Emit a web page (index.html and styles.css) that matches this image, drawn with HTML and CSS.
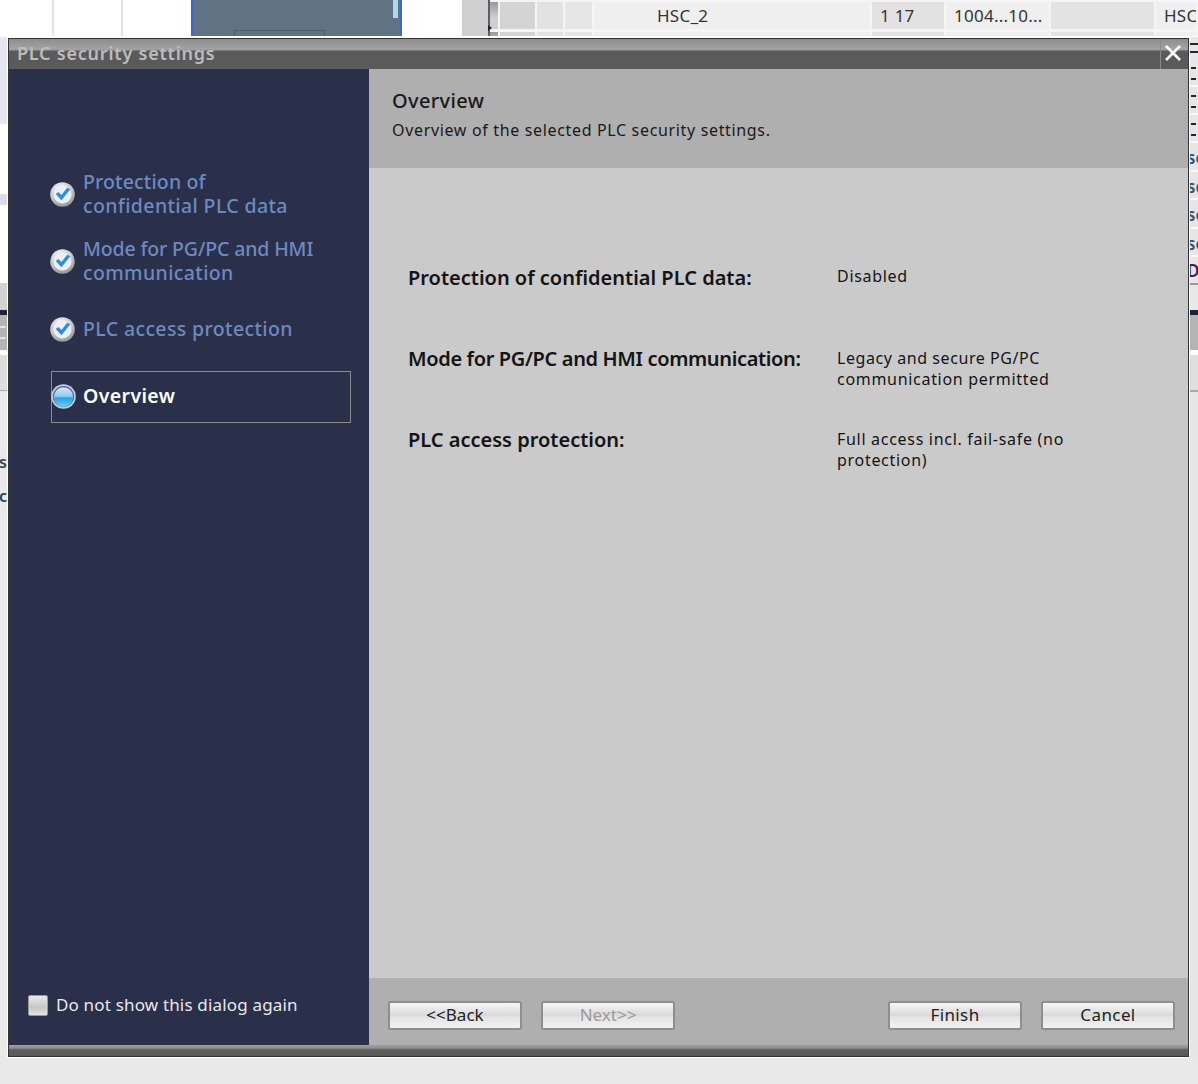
FILE: index.html
```html
<!DOCTYPE html>
<html lang="en">
<head>
<meta charset="utf-8">
<title>PLC security settings</title>
<link rel="stylesheet" href="styles.css">
</head>
<body>
<svg class="defs" width="0" height="0" aria-hidden="true">
  <defs>
    <radialGradient id="ring" cx="40%" cy="25%" r="85%">
      <stop offset="0" stop-color="#f4f4f4"/>
      <stop offset="0.55" stop-color="#c8c8c8"/>
      <stop offset="1" stop-color="#868686"/>
    </radialGradient>
    <linearGradient id="ball" x1="0" y1="0" x2="0" y2="1">
      <stop offset="0" stop-color="#d6e6f6"/>
      <stop offset="0.45" stop-color="#94cbf0"/>
      <stop offset="0.55" stop-color="#2f9fe0"/>
      <stop offset="1" stop-color="#5fd8f4"/>
    </linearGradient>
    <symbol id="check" viewBox="0 0 24 24">
      <circle cx="12" cy="12" r="11.8" fill="url(#ring)"/>
      <circle cx="12" cy="12" r="8.6" fill="#eceff5"/>
      <path d="M5.5 11.5 L11 17.5 L19.5 7 L16.5 5.5 L11 12.5 L8 9.5 Z" fill="#2c8ee0"/>
    </symbol>
    <symbol id="current" viewBox="0 0 24 24">
      <circle cx="12" cy="12" r="11.8" fill="#c9ccd6"/>
      <circle cx="12" cy="12" r="10.2" fill="#4a62b8"/>
      <circle cx="12" cy="12.6" r="9.4" fill="url(#ball)"/>
    </symbol>
  </defs>
</svg>
<div class="page">
  <div class="top">
    <div class="t-col t-w1"></div>
    <div class="t-col t-w2"></div>
    <div class="t-col t-w3"></div>
    <div class="selbox"><span class="selbar"></span><span class="selinner"></span></div>
    <div class="t-gap"></div>
    <div class="table">
      <div class="t-handle"><span class="t-arrow"></span></div>
      <div class="t-rows">
        <div class="t-row">
          <span class="c c0"></span><span class="c c1"></span><span class="c c2"></span><span class="c c3"></span>
          <span class="c c4">HSC_2</span>
          <span class="c c5">1 17</span>
          <span class="c c6">1004...10...</span>
          <span class="c c7"></span>
          <span class="c c8">HSC</span>
        </div>
        <div class="t-row">
          <span class="c c0"></span><span class="c c1"></span><span class="c c2"></span><span class="c c3"></span>
          <span class="c c4"></span><span class="c c5"></span><span class="c c6"></span><span class="c c7"></span><span class="c c8"></span>
        </div>
      </div>
    </div>
  </div>
  <div class="middle">
    <div class="left-edge">
      <div class="le a"></div><div class="le b"></div><div class="le c2b"></div><div class="le b2"></div>
      <div class="le d"></div><div class="le e"></div><div class="le f">C</div><div class="le g"></div><div class="le h"></div>
      <div class="le i"><span class="cut one">s</span><span class="cut two">c</span></div>
    </div>
    <section class="dialog">
      <header class="titlebar">
        <span class="title">PLC security settings</span>
        <button class="close" aria-label="Close">
          <svg width="18" height="18" viewBox="0 0 18 18"><path d="M2 2 L16 16 M16 2 L2 16" stroke="#fff" stroke-width="2.6"/></svg>
        </button>
      </header>
      <div class="content">
        <aside class="side">
          <ul class="steps">
            <li class="step s1"><svg class="ic"><use href="#check"/></svg><span><span class="ln l1">Protection of</span><span class="ln l2">confidential PLC data</span></span></li>
            <li class="step s2"><svg class="ic"><use href="#check"/></svg><span><span class="ln l3">Mode for PG/PC and HMI</span><span class="ln l2">communication</span></span></li>
            <li class="step s3"><svg class="ic"><use href="#check"/></svg><span class="ln l2">PLC access protection</span></li>
            <li class="step s4"><svg class="ic"><use href="#current"/></svg><span class="ln l2">Overview</span></li>
          </ul>
          <label class="dont"><span class="box"></span><span>Do not show this dialog again</span></label>
        </aside>
        <main class="main">
          <div class="head">
            <h1>Overview</h1>
            <p>Overview of the selected PLC security settings.</p>
          </div>
          <div class="body">
            <div class="item i1"><div class="k">Protection of confidential PLC data:</div><div class="v">Disabled</div></div>
            <div class="item i2"><div class="k tight">Mode for PG/PC and HMI communication:</div><div class="v"><span class="ln l4">Legacy and secure PG/PC</span><span class="ln">communication permitted</span></div></div>
            <div class="item i3"><div class="k">PLC access protection:</div><div class="v"><span class="ln">Full access incl. fail-safe (no</span><span class="ln">protection)</span></div></div>
          </div>
          <div class="foot">
            <button class="btn">&lt;&lt;Back</button>
            <button class="btn off">Next&gt;&gt;</button>
            <span class="spacer"></span>
            <button class="btn wide">Finish</button>
            <button class="btn wide">Cancel</button>
          </div>
        </main>
      </div>
      <div class="bottombar"></div>
    </section>
    <div class="right-edge">
      <div class="re blank"></div>
      <div class="re dash"><i></i><i></i></div>
      <div class="re dash"><i></i><i></i></div>
      <div class="re dash"><i></i><i></i></div>
      <div class="re txt">sc</div><div class="re txt">sc</div><div class="re txt">sc</div><div class="re txt">sc</div><div class="re txt d">DI</div>
      <div class="re line"></div><div class="re dark"></div><div class="re grey"></div><div class="re white"></div><div class="re pale"></div><div class="re rest"></div>
    </div>
  </div>
  <div class="bottom"></div>
</div>
</body>
</html>
```
FILE: styles.css
```css
* { box-sizing: border-box; }
html, body { margin: 0; padding: 0; background: #e9e9e9; }
body { font-family: "Noto Sans", "Open Sans", sans-serif; overflow: hidden; }
.defs { position: absolute; }
.page { width: 1198px; height: 1084px; display: flex; flex-direction: column; overflow: hidden; }
.ln { display: block; white-space: nowrap; }

/* window behind the dialog */
.top { height: 37px; display: flex; background: #fff; flex: none; overflow: hidden; border-bottom: 1px solid #fff; }
.t-col { height: 100%; border-right: 2px solid #e3e3ee; }
.t-w1 { width: 54px; }
.t-w2 { width: 69px; }
.t-w3 { width: 68px; border-right: 0; }
.selbox { width: 211px; background: #607284; border: 2px solid #3a67d6; border-width: 0 2px; position: relative; }
.selbar { position: absolute; left: 200px; top: 0; width: 5px; height: 18px; background: #a9dcea; }
.selinner { position: absolute; left: 41px; top: 30px; width: 91px; height: 8px; border: 1px solid #4d5d6d; }
.t-gap { width: 60px; }
.table { flex: 1; display: flex; background: #f5f5f5; min-width: 0; }
.t-handle { width: 28px; flex: none; background: #cfcfcf; position: relative; }
.t-handle::after { content: ""; position: absolute; right: 0; top: 0; bottom: 0; width: 2px; background: #55606c; }
.t-arrow { position: absolute; right: -5px; top: 25px; z-index: 1; border: 3px solid transparent; border-left: 4px solid #222; }
.t-rows { flex: 1; min-width: 0; padding-top: 2px; display: flex; flex-direction: column; gap: 3px; }
.t-row { flex: none; display: flex; height: 27px; font-size: 17px; color: #333; line-height: 28px; letter-spacing: .25px; }
.c { display: block; flex: none; border-right: 2px solid #f5f5f5; height: 27px; white-space: nowrap; overflow: hidden; }
.c0 { width: 10px; background: linear-gradient(#9a9a9a, #cfcfcf 60%); }
.c1 { width: 37px; background: #d4d4d4; }
.c2 { width: 28px; background: #e2e2e2; }
.c3 { width: 29px; background: #e6e6e6; }
.c4 { width: 278px; padding-left: 63px; background: #efefef; }
.c5 { width: 74px; padding-left: 8px; background: #e2e2e2; }
.c6 { width: 105px; padding-left: 8px; background: #efefef; }
.c7 { width: 105px; background: #e3e3e3; }
.c8 { flex: 1; padding-left: 8px; background: #efefef; }

.middle { flex: none; height: 1021px; display: flex; }
.left-edge { width: 7px; display: flex; flex-direction: column; overflow: hidden; font-size: 18px; color: #345; }
.le { width: 100%; flex: none; }
.le.a { height: 87px; background: #e6e6f0; }
.le.b { height: 70px; background: #fff; }
.le.c2b { height: 11px; background: #dcdce8; }
.le.b2 { height: 78px; background: #fff; }
.le.d { height: 27px; background: #d2d2d2; }
.le.e { height: 5px; background: #1e2436; }
.le.f { height: 35px; background: #b4b4b4; color: #eee; line-height: 34px; text-indent: -5px; }
.le.g { height: 5px; background: #fff; }
.le.h { height: 36px; background: #dedede; border-bottom: 1px solid #aaa; }
.le.i { height: 500px; background: #e9e9e9; position: relative; }
.cut { position: absolute; right: 0; line-height: 18px; font-size: 16px; font-weight: 600; }
.cut.one { top: 62px; }
.cut.two { top: 96px; color: #146; }

.dialog { width: 1183px; height: 1021px; border: 1px solid #fff; display: flex; flex-direction: column; }
.titlebar { height: 31px; flex: none; display: flex; justify-content: space-between; border: 1px solid #333; border-width: 1px 1px 0;
  background: linear-gradient(#8d8d8d 0, #a3a3a3 10px, #9a9a9a 11px, #5a5a5a 12px, #5a5a5a 100%); }
.title { padding: 1px 0 0 8px; font-size: 18px; line-height: 26px; font-weight: 600; color: #bcbcbc; letter-spacing: .78px; }
.close { width: 28px; padding: 0 3px 2px 0; border: 0; border-left: 1px solid #8a8a8a; background: transparent; display: flex; align-items: center; justify-content: center; }
.content { flex: 1; display: flex; min-height: 0; border: 1px solid #333; border-width: 0 1px; }
.side { width: 360px; background: #2a2f4a; flex: none; display: flex; flex-direction: column; justify-content: space-between; }
.steps { list-style: none; margin: 0; padding: 0 0 0 42px; }
.step { display: flex; align-items: center; gap: 8px; font-size: 19.5px; line-height: 24px; color: #6d8ac0; font-weight: 500; }
.ic { width: 25px; height: 25px; flex: none; margin-left: -1px; }
.l1 { letter-spacing: .15px; }
.l2 { letter-spacing: .38px; }
.l3 { letter-spacing: -.14px; }
.s1 { margin-top: 101px; height: 48px; }
.s2 { margin-top: 19px; height: 48px; }
.s3 { margin-top: 20px; height: 48px; }
.s4 { margin-top: 18px; height: 52px; width: 300px; padding-bottom: 2px; gap: 7px; border: 1px solid #8b8b8b; color: #fff; font-weight: 600; }
.dont { display: flex; align-items: center; gap: 8px; margin: 0 0 28px 19px; font-size: 17px; line-height: 24px; letter-spacing: .17px; color: #e8e8ee; }
.box { width: 20px; height: 21px; border-radius: 2px; background: linear-gradient(#e9e9e9, #c6c6c6 60%, #e3e3e3); border: 1px solid #999; }
.main { flex: 1; display: flex; flex-direction: column; min-width: 0; }
.head { height: 99px; flex: none; background: #afafaf; padding: 18px 0 0 23px; color: #1a1a1a; }
.head h1 { margin: 0; font-size: 20px; line-height: 28px; font-weight: 500; letter-spacing: .35px; }
.head p { margin: 4px 0 0; font-size: 16px; line-height: 22px; letter-spacing: .66px; }
.body { flex: 1; background: #cacaca; padding: 94px 0 0 39px; }
.item { display: flex; height: 81px; color: #141414; }
.k { width: 429px; flex: none; font-size: 20px; line-height: 32px; font-weight: 600; white-space: nowrap; }
.k.tight { letter-spacing: -.35px; }
.v { font-size: 16px; line-height: 21px; padding-top: 5px; letter-spacing: .7px; }
.i1 .v { padding-top: 4px; }
.l4 { letter-spacing: .57px; }
.foot { height: 67px; flex: none; background: #afafaf; display: flex; gap: 19px; padding: 23px 13px 0 19px; }
.spacer { flex: 1; }
.btn { width: 134px; height: 29px; border: 2px solid #8e8e8e; border-radius: 3px; padding: 0 0 2px; font: 17px/24px "Noto Sans", sans-serif; color: #222;
  background: linear-gradient(#f6f6f6, #d9d9d9 50%, #e3e3e3 55%, #f2f2f2); }
.btn.off { color: #9b9b9b; }
.btn.wide { letter-spacing: .4px; }
.bottombar { height: 12px; flex: none; border: 1px solid #333; border-width: 0 1px 1px; background: linear-gradient(#a0a0a0, #8d8d8d 3px, #5c5c5c 5px, #5a5a5a); }

.right-edge { flex: 1; min-width: 0; display: flex; flex-direction: column; overflow: hidden; background: #e6e6e6; font-size: 17px; color: #36526b; }
.re { flex: none; width: 100%; }
.blank { height: 22px; background: repeating-linear-gradient(#e6e6e6 0 6px, #223 6px 8px); }
.dash { height: 28px; padding-top: 8px; border-bottom: 2px solid #f7f7f7; }
.dash i { display: block; width: 5px; height: 2px; background: #223; margin: 0 0 9px 1px; }
.txt { height: 28.5px; line-height: 29px; font-weight: 600; text-indent: -3px; white-space: nowrap; border-bottom: 2px solid #f7f7f7; }
.txt.d { height: 26px; line-height: 27px; color: #4a1850; border-bottom: 0; }
.line { height: 27px; border-top: 2px solid #999; background: #e8e8e8; }
.dark { height: 5px; background: #1e2436; }
.grey { height: 35px; background: #b4b4b4; }
.white { height: 5px; background: #fff; }
.pale { height: 37px; background: #dedede; border-bottom: 2px solid #aaa; }
.rest { flex: 1; }
.bottom { flex: 1; background: #e9e9e9; }
```
